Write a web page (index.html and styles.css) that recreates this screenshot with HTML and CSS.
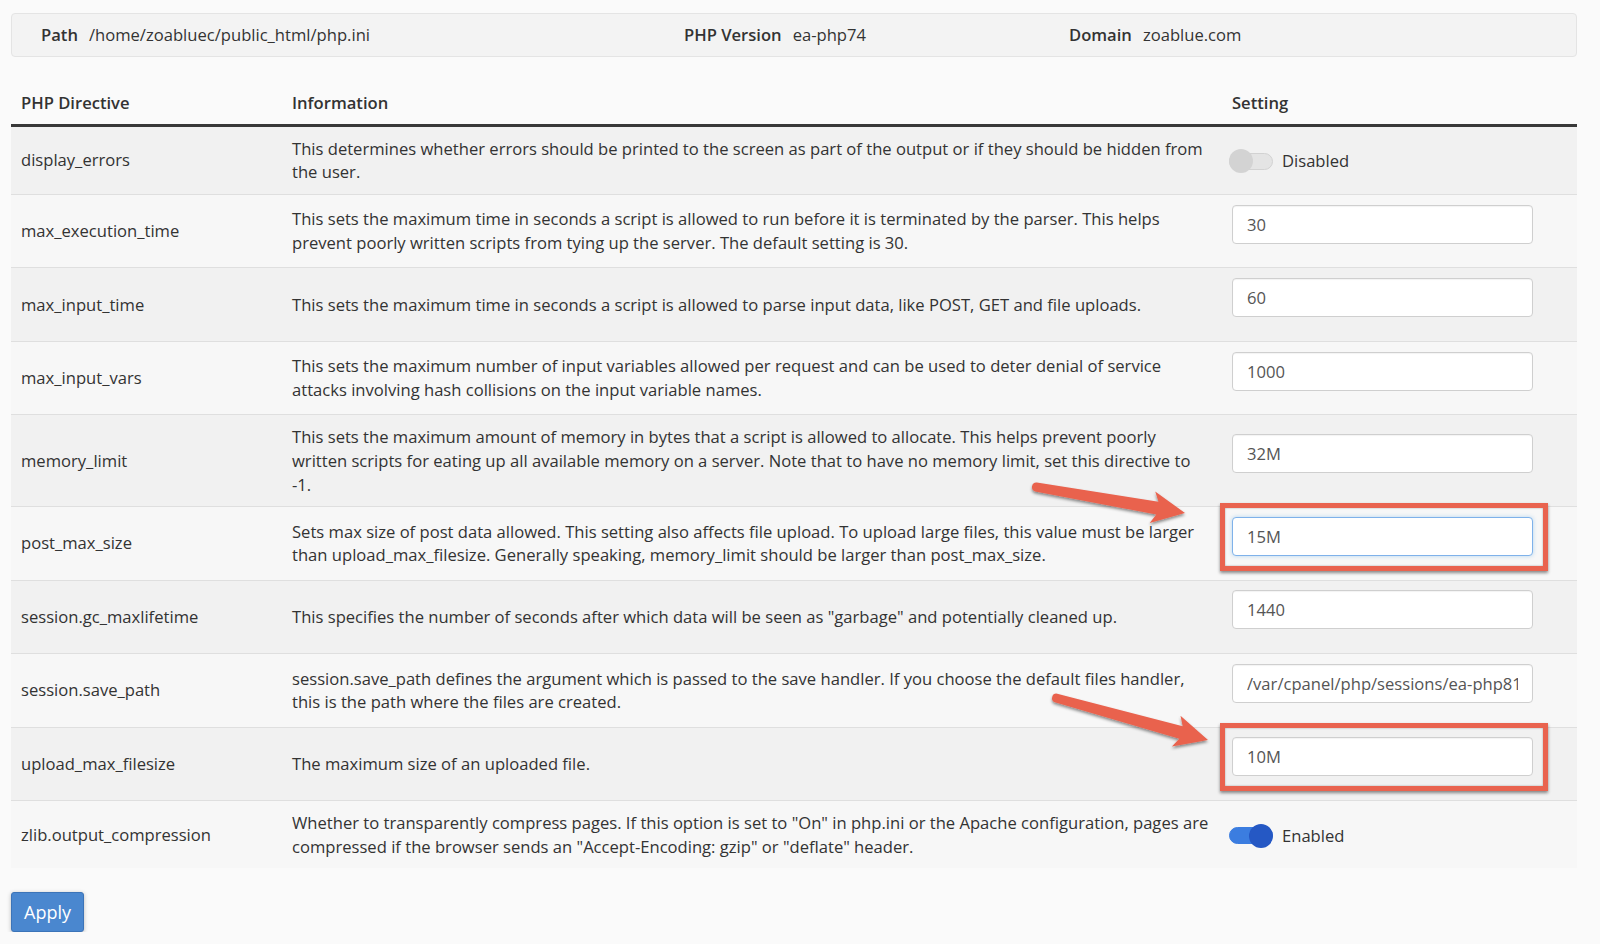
FILE: index.html
```html
<!DOCTYPE html>
<html>

<head>
    <meta charset="utf-8">
    <title>MultiPHP INI Editor</title>
    <link rel="stylesheet" href="styles.css">
</head>

<body>
    <div class="page">
        <div class="ini-info">
            <div class="info-item info-path"><strong>Path</strong><span>/home/zoabluec/public_html/php.ini</span></div>
            <div class="info-item info-version"><strong>PHP Version</strong><span>ea-php74</span></div>
            <div class="info-item info-domain"><strong>Domain</strong><span>zoablue.com</span></div>
        </div>

        <table class="directives">
            <colgroup>
                <col class="col-directive">
                <col class="col-info">
                <col class="col-setting">
            </colgroup>
            <thead>
                <tr>
                    <th>PHP Directive</th>
                    <th>Information</th>
                    <th>Setting</th>
                </tr>
            </thead>
            <tbody>
                <tr>
                    <td>display_errors</td>
                    <td>This determines whether errors should be printed to the screen as part of the output or if they should be hidden from the user.</td>
                    <td>
                        <label class="toggle">
                            <span class="toggle-track"><span class="toggle-knob"></span></span>
                            <span class="toggle-label">Disabled</span>
                        </label>
                    </td>
                </tr>
                <tr>
                    <td>max_execution_time</td>
                    <td>This sets the maximum time in seconds a script is allowed to run before it is terminated by the parser. This helps prevent poorly written scripts from tying up the server. The default setting is 30.</td>
                    <td><div class="field"><input type="text" value="30"></div></td>
                </tr>
                <tr>
                    <td>max_input_time</td>
                    <td>This sets the maximum time in seconds a script is allowed to parse input data, like POST, GET and file uploads.</td>
                    <td><div class="field"><input type="text" value="60"></div></td>
                </tr>
                <tr>
                    <td>max_input_vars</td>
                    <td>This sets the maximum number of input variables allowed per request and can be used to deter denial of service attacks involving hash collisions on the input variable names.</td>
                    <td><div class="field"><input type="text" value="1000"></div></td>
                </tr>
                <tr>
                    <td>memory_limit</td>
                    <td>This sets the maximum amount of memory in bytes that a script is allowed to allocate. This helps prevent poorly written scripts for eating up all available memory on a server. Note that to have no memory limit, set this directive to -1.</td>
                    <td><div class="field"><input type="text" value="32M"></div></td>
                </tr>
                <tr>
                    <td>post_max_size</td>
                    <td>Sets max size of post data allowed. This setting also affects file upload. To upload large files, this value must be larger than upload_max_filesize. Generally speaking, memory_limit should be larger than post_max_size.</td>
                    <td><div class="field"><input type="text" value="15M" class="focused"><span class="callout"></span></div></td>
                </tr>
                <tr>
                    <td>session.gc_maxlifetime</td>
                    <td>This specifies the number of seconds after which data will be seen as "garbage" and potentially cleaned up.</td>
                    <td><div class="field"><input type="text" value="1440"></div></td>
                </tr>
                <tr>
                    <td>session.save_path</td>
                    <td>session.save_path defines the argument which is passed to the save handler. If you choose the default files handler, this is the path where the files are created.</td>
                    <td><div class="field"><input type="text" value="/var/cpanel/php/sessions/ea-php81"></div></td>
                </tr>
                <tr>
                    <td>upload_max_filesize</td>
                    <td>The maximum size of an uploaded file.</td>
                    <td><div class="field"><input type="text" value="10M"><span class="callout"></span></div></td>
                </tr>
                <tr>
                    <td>zlib.output_compression</td>
                    <td>Whether to transparently compress pages. If this option is set to "On" in php.ini or the Apache configuration, pages are compressed if the browser sends an "Accept-Encoding: gzip" or "deflate" header.</td>
                    <td>
                        <label class="toggle on">
                            <span class="toggle-track"><span class="toggle-knob"></span></span>
                            <span class="toggle-label">Enabled</span>
                        </label>
                    </td>
                </tr>
            </tbody>
        </table>

        <button class="btn-apply">Apply</button>
    </div>

    <!-- screenshot annotation arrows -->
    <svg class="annotations" width="1600" height="944" viewBox="0 0 1600 944">
        <defs>
            <filter id="arrowShadow" x="-10%" y="-30%" width="120%" height="160%">
                <feDropShadow dx="0" dy="2" stdDeviation="1.5" flood-color="#000" flood-opacity="0.45"/>
            </filter>
        </defs>
        <path class="arrow" filter="url(#arrowShadow)"
            d="M1036.8,482.6 L1158.5,501.8 L1155.2,491.5 L1185,513 L1149.7,523.1 L1156.3,514.6 L1035.2,491.4 A4.5,4.5 0 0 1 1036.8,482.6 Z"/>
        <path class="arrow" filter="url(#arrowShadow)"
            d="M1057.2,693.7 L1182.7,726.3 L1180.5,715.8 L1208,740 L1171.9,746.6 L1179.3,738.8 L1054.8,702.3 A4.5,4.5 0 0 1 1057.2,693.7 Z"/>
    </svg>
</body>

</html>
```

FILE: styles.css
```css
body {
    margin: 0;
    font-family: "Open Sans", "Liberation Sans", sans-serif;
    font-size: 16.6px;
    line-height: 23.75px;
    color: #333;
    background-color: #fafafa;
    position: relative;
}

.page {
    width: 1566px;
    padding: 13px 0 0 11px;
}

.ini-info {
    display: flex;
    height: 42px;
    align-items: center;
    background-color: #f3f3f3;
    border: 1px solid #e4e4e4;
    border-radius: 4px;
    padding-left: 29px;
}

.info-item {
    display: flex;
    gap: 11px;
}

.info-item strong {
    font-weight: 600;
}

.info-path {
    width: 643px;
}

.info-version {
    width: 385px;
}

.directives {
    width: 1566px;
    margin-top: 20px;
    border-collapse: collapse;
    table-layout: fixed;
}

.col-directive {
    width: 271px;
}

.col-info {
    width: 940px;
}

.col-setting {
    width: 355px;
}

.directives th {
    text-align: left;
    font-weight: 600;
    padding: 14px 10px 9px;
    border-bottom: 3px solid #383838;
}

.directives td {
    padding: 9.75px 10px;
    vertical-align: middle;
    border-top: 1px solid #dfdfdf;
}

.directives tbody tr:first-child td {
    border-top: none;
}

.directives tbody tr:nth-child(odd) {
    background-color: #f1f1f1;
}

.directives tbody tr:nth-child(even) {
    background-color: #f7f7f7;
}

.field {
    position: relative;
    width: 301px;
    margin-bottom: 14px;
}

.field input {
    display: block;
    box-sizing: border-box;
    width: 301px;
    height: 39px;
    padding: 0 14px;
    font-family: inherit;
    font-size: 16.6px;
    color: #555;
    background-color: #fff;
    border: 1px solid #cfcfcf;
    border-radius: 4px;
    box-shadow: inset 0 1px 1px rgba(0, 0, 0, 0.05);
}

.field input.focused {
    border-color: #7fb2ea;
    box-shadow: 0 0 4px rgba(102, 175, 233, 0.45);
}

.callout {
    position: absolute;
    top: -14px;
    left: -12px;
    right: -15px;
    bottom: -15px;
    border: 5px solid #e9634f;
    box-shadow: 0 2px 3px rgba(0, 0, 0, 0.45), inset 0 0 2px rgba(0, 0, 0, 0.35);
    pointer-events: none;
}

.toggle {
    display: flex;
    align-items: center;
    gap: 9px;
    margin-left: -3px;
    padding-top: 2px;
}

.toggle-track {
    position: relative;
    width: 44px;
    height: 17px;
    box-sizing: border-box;
    border-radius: 9px;
    background-color: #e4e4e4;
    border: 1px solid #d2d2d2;
}

.toggle-knob {
    position: absolute;
    top: -4.5px;
    left: -1px;
    width: 24px;
    height: 24px;
    border-radius: 50%;
    background-color: #d3d3d3;
}

.toggle.on .toggle-track {
    background-color: #3b7de0;
    border-color: #3b7de0;
}

.toggle.on .toggle-knob {
    left: auto;
    right: -1px;
    background-color: #2558c4;
}

.btn-apply {
    display: block;
    margin-top: 24px;
    width: 73px;
    height: 40px;
    font-family: inherit;
    font-size: 18px;
    color: #fff;
    background-color: #4a87cf;
    border: 1px solid #3c74b8;
    border-radius: 3px;
    box-shadow: 0 1px 4px rgba(0, 0, 0, 0.25);
    cursor: pointer;
}

.annotations {
    position: absolute;
    top: 0;
    left: 0;
    pointer-events: none;
}

.arrow {
    fill: #e9624e;
}
```
